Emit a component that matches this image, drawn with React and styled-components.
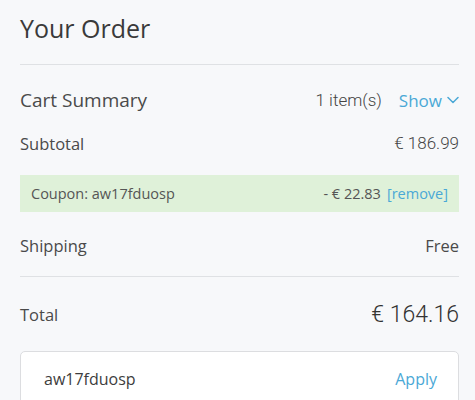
import React from 'react'
import styled, { createGlobalStyle } from 'styled-components'

const GlobalStyle = createGlobalStyle`
  html, body {
    margin: 0;
    padding: 0;
    background: #f7f8fa;
  }
  body {
    font-family: "Open Sans", "Lato", sans-serif;
    color: #3d3d3d;
  }
`

const Wrapper = styled.div`
  width: 475px;
  height: 400px;
  padding: 0 16px 0 20px;
  box-sizing: border-box;
  overflow: hidden;
`

const Title = styled.h1`
  margin: 0;
  height: 65px;
  display: flex;
  align-items: center;
  padding-bottom: 8px;
  box-sizing: border-box;
  font-size: 25px;
  font-weight: 400;
  color: #3a3a3a;
  border-bottom: 1px solid #dfe1e4;
`

const Row = styled.div`
  display: flex;
  align-items: center;
  justify-content: space-between;
  height: ${p => p.h || 42}px;
  font-size: ${p => p.size || 16.5}px;
  color: #4a4a4a;
`

const Right = styled.div`
  display: flex;
  align-items: center;
  gap: ${p => p.gap || 0}px;
`

const Muted = styled.span`
  font-family: "Roboto", "Lato", sans-serif;
  font-size: 17px;
  font-weight: 300;
  color: #444;
`

const Link = styled.a`
  color: #4aa8d6;
  display: inline-flex;
  align-items: center;
  gap: 5px;
  font-size: ${p => p.size || 16}px;
  cursor: pointer;
`

const Coupon = styled.div`
  display: flex;
  align-items: center;
  justify-content: space-between;
  height: 37px;
  margin: 24px 0 13px;
  padding: 0 11px;
  background: #dff1d9;
  font-size: 14.5px;
  color: #555;
`

const Divider = styled.div`
  height: 1px;
  background: #dfe1e4;
  margin-top: 11px;
`

const Total = styled.span`
  font-family: "Roboto", "Lato", sans-serif;
  font-size: 23px;
  font-weight: 300;
  color: #333;
`

const InputBox = styled.div`
  height: 56px;
  background: #fff;
  border: 1px solid #dcdde0;
  border-radius: 5px;
  display: flex;
  align-items: center;
  justify-content: space-between;
  padding: 0 21px 0 23px;
  box-sizing: border-box;
`

const Code = styled.span`
  font-size: 16px;
  color: #3d3d3d;
`

const Chevron = () => (
  <svg width="12" height="8" viewBox="0 0 12 8" fill="none">
    <path d="M1 1.5 L6 6.5 L11 1.5" stroke="#4aa8d6" strokeWidth="1.5" strokeLinecap="round" strokeLinejoin="round" />
  </svg>
)

export default function App() {
  return (
    <Wrapper>
      <GlobalStyle />
      <Title>Your Order</Title>
      <Row h={70} size={19}>
        <span>Cart Summary</span>
        <Right gap={17}>
          <Muted>1 item(s)</Muted>
          <Link size={17}>Show <Chevron /></Link>
        </Right>
      </Row>
      <Row h={16}>
        <span>Subtotal</span>
        <Muted>€ 186.99</Muted>
      </Row>
      <Coupon>
        <span>Coupon: aw17fduosp</span>
        <Right gap={6}>
          <span>- € 22.83</span>
          <Link size={14.5}>[remove]</Link>
        </Right>
      </Coupon>
      <Row h={40}>
        <span>Shipping</span>
        <span>Free</span>
      </Row>
      <Divider />
      <Row h={74}>
        <span>Total</span>
        <Total>€ 164.16</Total>
      </Row>
      <InputBox>
        <Code>aw17fduosp</Code>
        <Link size={16}>Apply</Link>
      </InputBox>
    </Wrapper>
  )
}
